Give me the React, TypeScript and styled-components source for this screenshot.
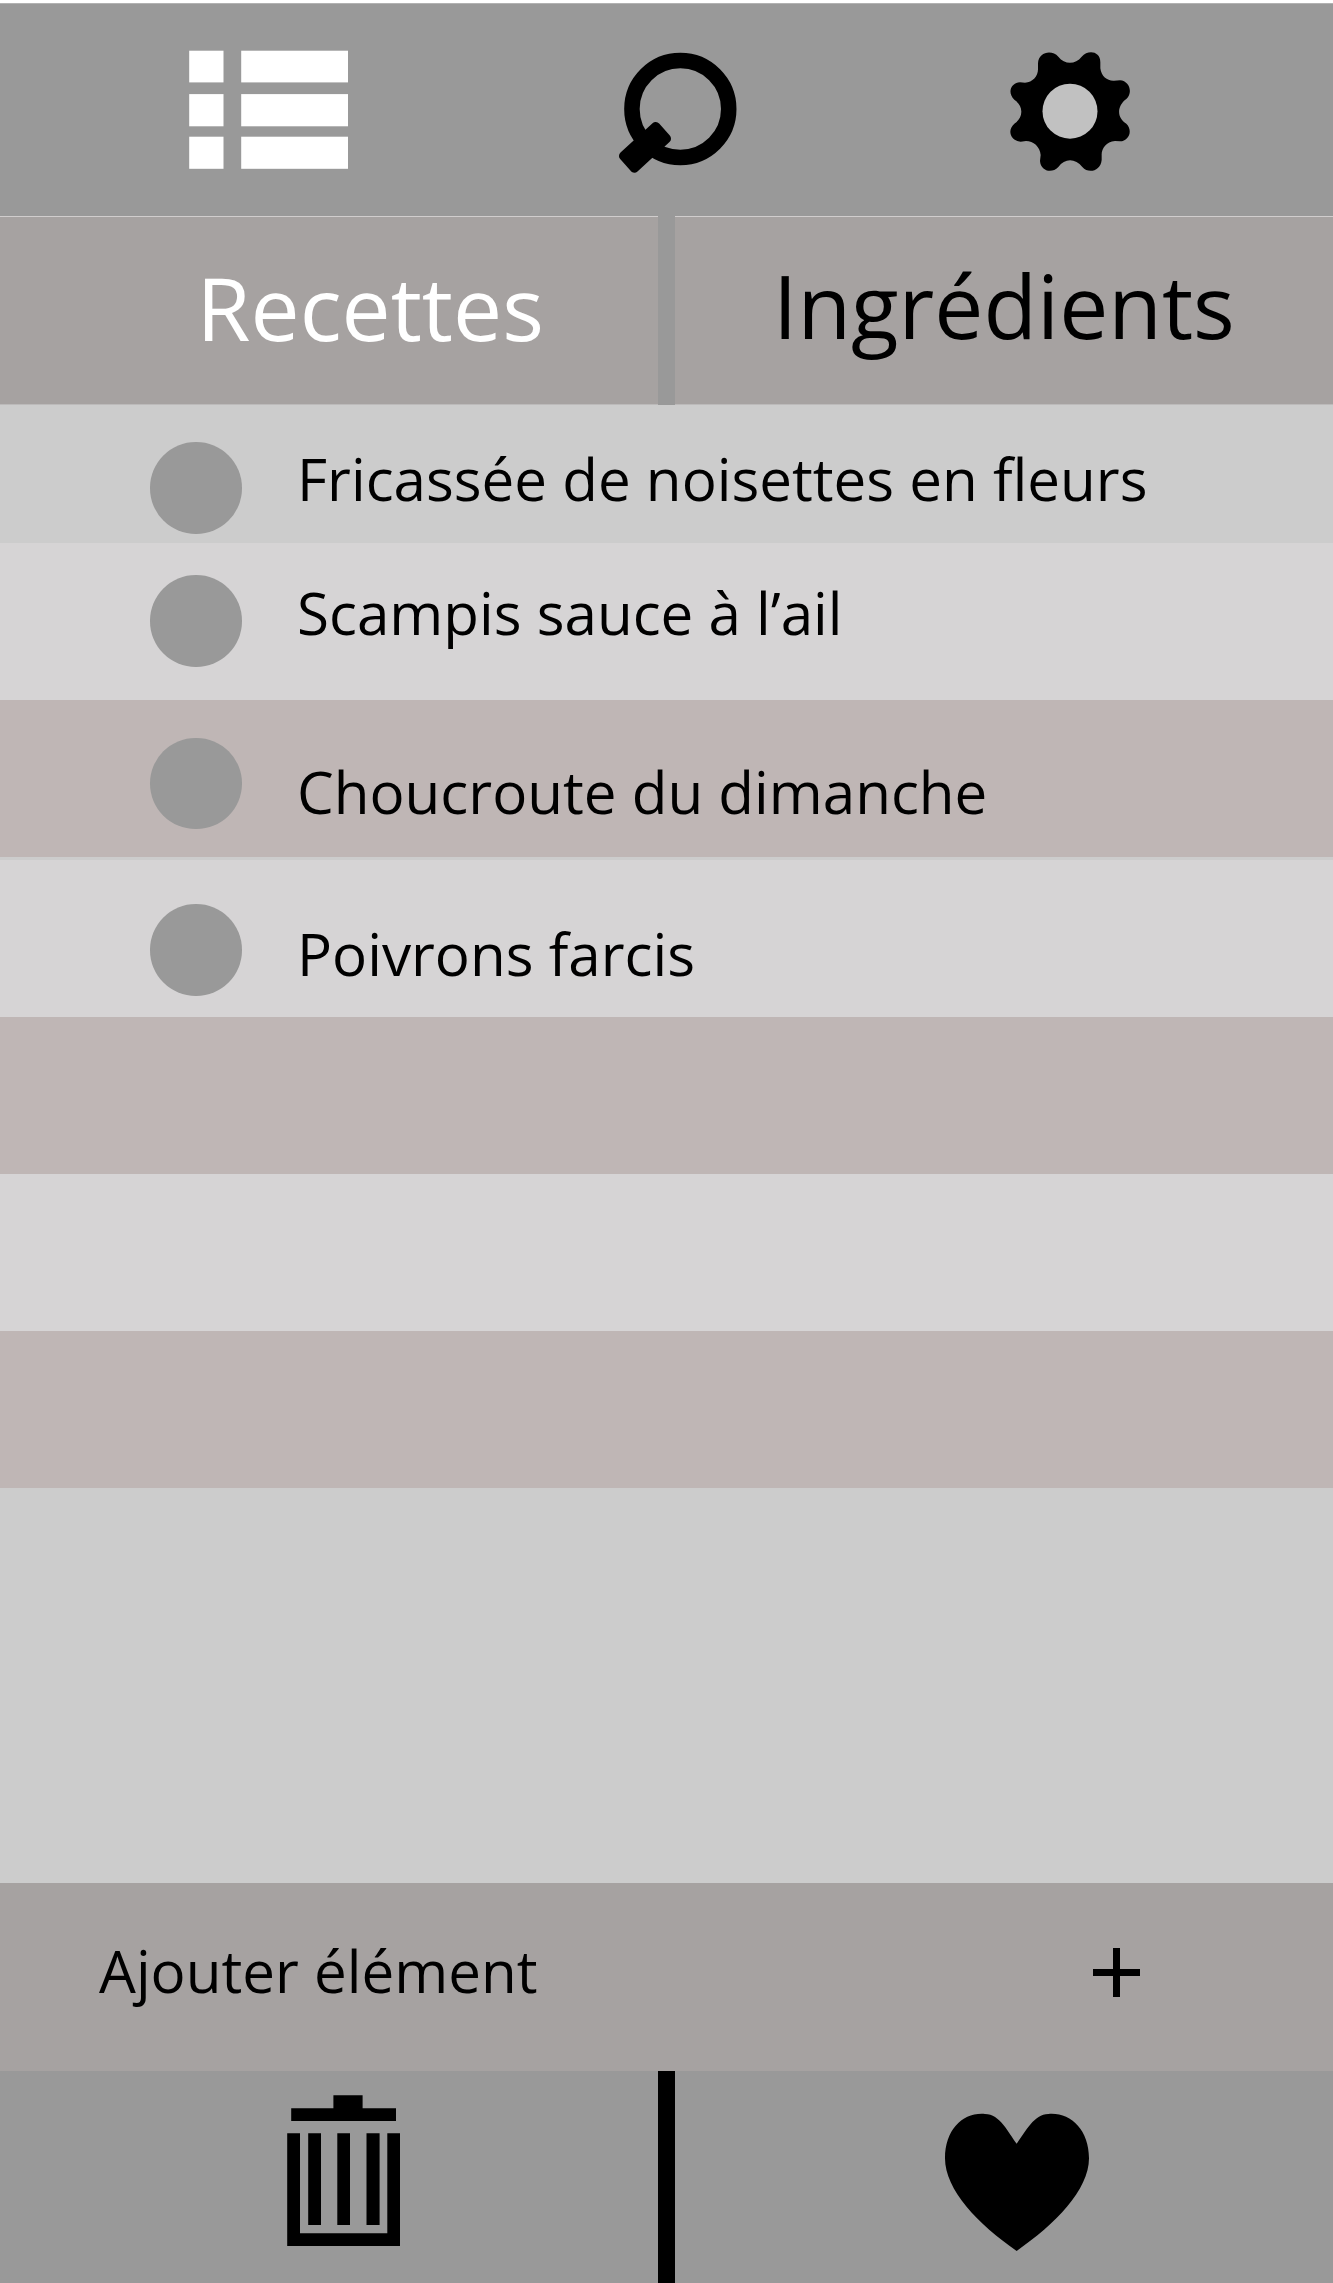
import React from "react";
import styled, { createGlobalStyle } from "styled-components";

const GlobalStyle = createGlobalStyle`
  body { margin: 0; background: #fff; }
  * { box-sizing: border-box; }
`;

const Screen = styled.main`
  display: flex;
  flex-direction: column;
  width: 1333px;
  height: 2283px;
  padding-top: 3px;
  overflow: hidden;
  background: #fff;
  color: #000;
  font-family: "Open Sans", "Noto Sans", sans-serif;
`;

const Toolbar = styled.nav`
  display: grid;
  grid-template-columns: 430px 391px 120px;
  height: 214px;
  flex: none;
  padding: 27px 0 0 189px;
  background: #999;
  border-top: 1px solid #b2b2b2;
  border-bottom: 1px solid #d0cdcd;
`;

const IconButton = styled.button<{ $w: number; $h: number; $top?: number }>`
  display: block;
  width: ${(p) => p.$w}px;
  height: ${(p) => p.$h}px;
  margin: ${(p) => p.$top ?? 0}px 0 0;
  padding: 0;
  border: 0;
  background: none;
  color: inherit;
  svg { display: block; width: 100%; height: 100%; }
`;

const Tabs = styled.div`
  display: flex;
  height: 188px;
  flex: none;
  background: #a6a2a1;
  border-bottom: 1px solid #bcbaba;
`;

const Tab = styled.div<{ $active?: boolean; $left: number; $top: number }>`
  width: 658px;
  flex: none;
  padding: ${(p) => p.$top}px 0 0 ${(p) => p.$left}px;
  color: ${(p) => (p.$active ? "#fff" : "#000")};
  font-size: 87.5px;
  line-height: 120px;
  white-space: nowrap;
`;

const Divider = styled.div<{ $color: string; $bleed?: number }>`
  width: 17px;
  flex: none;
  margin-top: -${(p) => p.$bleed ?? 0}px;
  margin-bottom: -${(p) => p.$bleed ?? 0}px;
  background: ${(p) => p.$color};
`;

const List = styled.ul`
  flex: 1;
  margin: 0;
  padding: 0;
  list-style: none;
  background: #ccc;
`;

const Row = styled.li<{ $h: number; $bg: string; $gap?: number }>`
  display: flex;
  height: ${(p) => p.$h}px;
  margin-top: ${(p) => p.$gap ?? 0}px;
  padding-left: 150px;
  gap: 55.5px;
  background: ${(p) => p.$bg};
`;

const Bullet = styled.span<{ $top: number }>`
  width: 91.5px;
  height: 91.5px;
  margin-top: ${(p) => p.$top}px;
  border-radius: 50%;
  background: #999;
`;

const Label = styled.span<{ $top: number }>`
  margin-top: ${(p) => p.$top}px;
  font-size: 58.33px;
  line-height: 80px;
  white-space: nowrap;
`;

const AddBar = styled.div`
  display: flex;
  height: 188px;
  flex: none;
  justify-content: space-between;
  padding: 0 193px 0 99px;
  background: #a6a2a1;
`;

const Footer = styled.footer`
  display: flex;
  height: 212px;
  flex: none;
  background: #999;
`;

const FooterCell = styled.div<{ $left: number; $top: number }>`
  width: 658px;
  flex: none;
  padding: ${(p) => p.$top}px 0 0 ${(p) => p.$left}px;
`;

const LIGHT = "#d6d4d5";
const DARK = "#bfb6b5";

const rows = [
  { text: "Fricassée de noisettes en fleurs", h: 138, bg: "#ccc", dot: 37, label: 34 },
  { text: "Scampis sauce à l’ail", h: 157, bg: LIGHT, dot: 32, label: 30 },
  { text: "Choucroute du dimanche", h: 157, bg: DARK, dot: 37.7, label: 52 },
  { text: "Poivrons farcis", h: 157, bg: LIGHT, gap: 3, dot: 44.3, label: 54 },
  { h: 157, bg: DARK },
  { h: 157, bg: LIGHT },
  { h: 157, bg: DARK },
];

const ListIcon = () => (
  <svg viewBox="0 0 159 120" fill="#fff">
    {[[1.7, 31.7], [45.1, 32.2], [87.7, 32.1]].map(([y, h]) => (
      <g key={y}>
        <rect x="0.2" y={y - 1} width="34.3" height={h} />
        <rect x="52.2" y={y - 1} width="106.8" height={h} />
      </g>
    ))}
  </svg>
);

const SearchIcon = () => (
  <svg viewBox="57 3 354 480">
    <circle cx="241" cy="237" r="145.2" fill="none" stroke="#000" strokeWidth="46.5" />
    <path d="M71 378 167 290 199 326 103 414Z" stroke="#000" strokeWidth="28" strokeLinejoin="round" />
  </svg>
);

const GearIcon = () => (
  <svg viewBox="60 3 360 480">
    <path d="M205 80C224 104 256 104 275 80C295 58 332 64 331 98L331 115C334 140 352 153 372 152L390 151C418 153 430 187 409 207C380 228 380 264 409 281C430 302 416 333 390 334L375 333C348 335 334 357 335 375L335 390C332 424 295 432 277 411C256 384 224 384 205 411C185 432 152 423 150 393L152 375C150 350 130 333 108 333L92 335C62 334 50 301 73 281C101 262 101 228 73 209C50 187 64 158 90 157L105 158C128 158 144 138 144 118L144 100C146 65 186 59 205 80Z" />
    <circle cx="240" cy="243.5" r="82.5" fill="#c1c1c1" />
  </svg>
);

const PlusIcon = () => (
  <svg viewBox="0 0 47 49">
    <path d="M0 21H20V0H27V21H47V28H27V49H20V28H0Z" />
  </svg>
);

const TrashIcon = () => (
  <svg viewBox="287 2095 113 151">
    <path d="M333.4 2095.3H362.6V2108.2H396V2121H291.2V2108.2H333.4Z" />
    <path d="M287.2 2133.2H300V2233.2H387.3V2133.2H400V2246H287.2Z" />
    <path d="M308.2 2133.2H321V2225H308.2ZM337.3 2133.2H350V2225H337.3ZM366.5 2133.2H379.6V2225H366.5Z" />
  </svg>
);

const HeartIcon = () => (
  <svg viewBox="45 69 432 414">
    <path d="M260 161C235 128 210 72 165 72C100 66 45 118 45 205C45 300 145 403 260 483C375 403 477 300 477 205C477 118 420 66 355 72C312 72 288 124 260 161Z" />
  </svg>
);

export default function App() {
  return (
    <>
      <GlobalStyle />
      <Screen>
        <Toolbar>
          <IconButton $w={159} $h={120} $top={19} aria-label="Liste">
            <ListIcon />
          </IconButton>
          <IconButton $w={118} $h={160} aria-label="Rechercher">
            <SearchIcon />
          </IconButton>
          <IconButton $w={120} $h={160} aria-label="Réglages">
            <GearIcon />
          </IconButton>
        </Toolbar>
        <Tabs>
          <Tab $active $left={196.5} $top={30}>Recettes</Tab>
          <Divider $color="#999" $bleed={1} />
          <Tab $left={98} $top={28}>Ingrédients</Tab>
        </Tabs>
        <List>
          {rows.map((r, i) => (
            <Row key={i} $h={r.h} $bg={r.bg} $gap={r.gap}>
              {r.text && (
                <>
                  <Bullet $top={r.dot ?? 0} />
                  <Label $top={r.label ?? 0}>{r.text}</Label>
                </>
              )}
            </Row>
          ))}
        </List>
        <AddBar>
          <Label $top={48}>Ajouter élément</Label>
          <IconButton $w={47} $h={49} $top={65} aria-label="Ajouter">
            <PlusIcon />
          </IconButton>
        </AddBar>
        <Footer>
          <FooterCell $left={287} $top={24}>
            <IconButton $w={113} $h={151} aria-label="Supprimer">
              <TrashIcon />
            </IconButton>
          </FooterCell>
          <Divider $color="#000" />
          <FooterCell $left={270} $top={42}>
            <IconButton $w={144} $h={138} aria-label="Favoris">
              <HeartIcon />
            </IconButton>
          </FooterCell>
        </Footer>
      </Screen>
    </>
  );
}
